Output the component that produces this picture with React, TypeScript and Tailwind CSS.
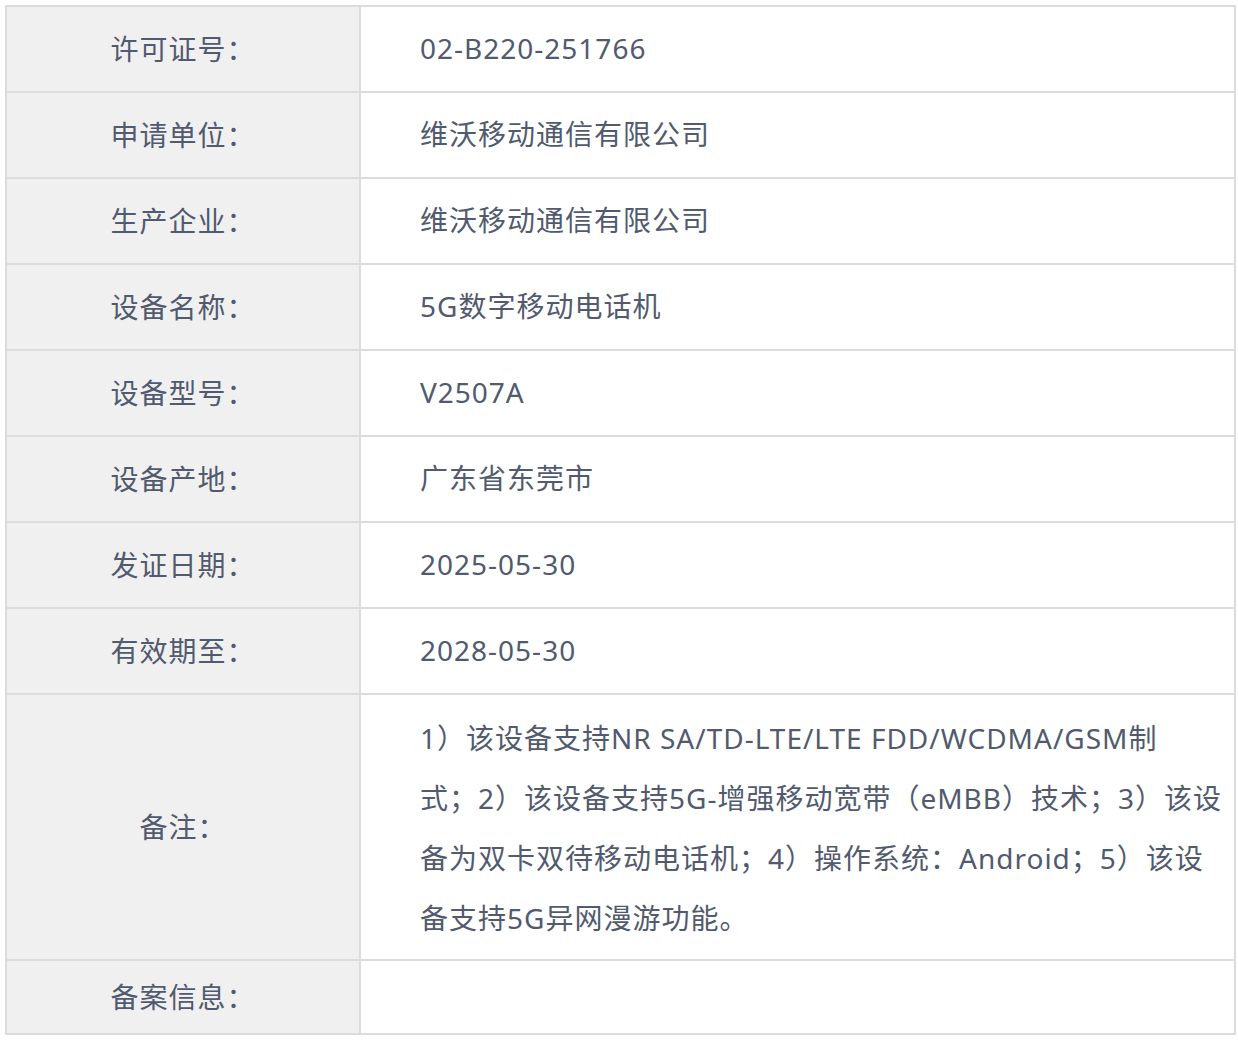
import React from 'react'

const rows: [string, string][] = [
  ['许可证号：', '02-B220-251766'],
  ['申请单位：', '维沃移动通信有限公司'],
  ['生产企业：', '维沃移动通信有限公司'],
  ['设备名称：', '5G数字移动电话机'],
  ['设备型号：', 'V2507A'],
  ['设备产地：', '广东省东莞市'],
  ['发证日期：', '2025-05-30'],
  ['有效期至：', '2028-05-30'],
]

const remark = [
  '1）该设备支持NR SA/TD-LTE/LTE FDD/WCDMA/GSM制',
  '式；2）该设备支持5G-增强移动宽带（eMBB）技术；3）该设',
  '备为双卡双待移动电话机；4）操作系统：Android；5）该设',
  '备支持5G异网漫游功能。',
]

function Label({ children }: { children: React.ReactNode }) {
  return (
    <div className="flex w-[354px] shrink-0 items-center justify-center border-r-2 border-[#dcdcdc] bg-[#f0f0f0]">
      {children}
    </div>
  )
}

export default function App() {
  return (
    <div
      className="min-h-[1044px] bg-white pl-[5px] pt-[5px] text-[28px] tracking-[1px] text-[#515a6e]"
      style={{ fontFamily: '"Noto Sans", "Noto Sans CJK SC", sans-serif' }}
    >
      <div className="w-[1231px] border-2 border-b-0 border-[#dcdcdc]">
        {rows.map(([k, v]) => (
          <div key={k} className="flex h-[86px] border-b-2 border-[#dcdcdc]">
            <Label>{k}</Label>
            <div className="flex items-center pb-[2px] pl-[59px]">{v}</div>
          </div>
        ))}
        <div className="flex h-[266px] border-b-2 border-[#dcdcdc]">
          <Label>备注：</Label>
          <div className="pl-[59px] pt-[13px] leading-[60px]">
            {remark.map((l) => (
              <div key={l} className="whitespace-nowrap">{l}</div>
            ))}
          </div>
        </div>
        <div className="flex h-[74px] border-b-2 border-[#dcdcdc]">
          <Label>备案信息：</Label>
          <div />
        </div>
      </div>
    </div>
  )
}
